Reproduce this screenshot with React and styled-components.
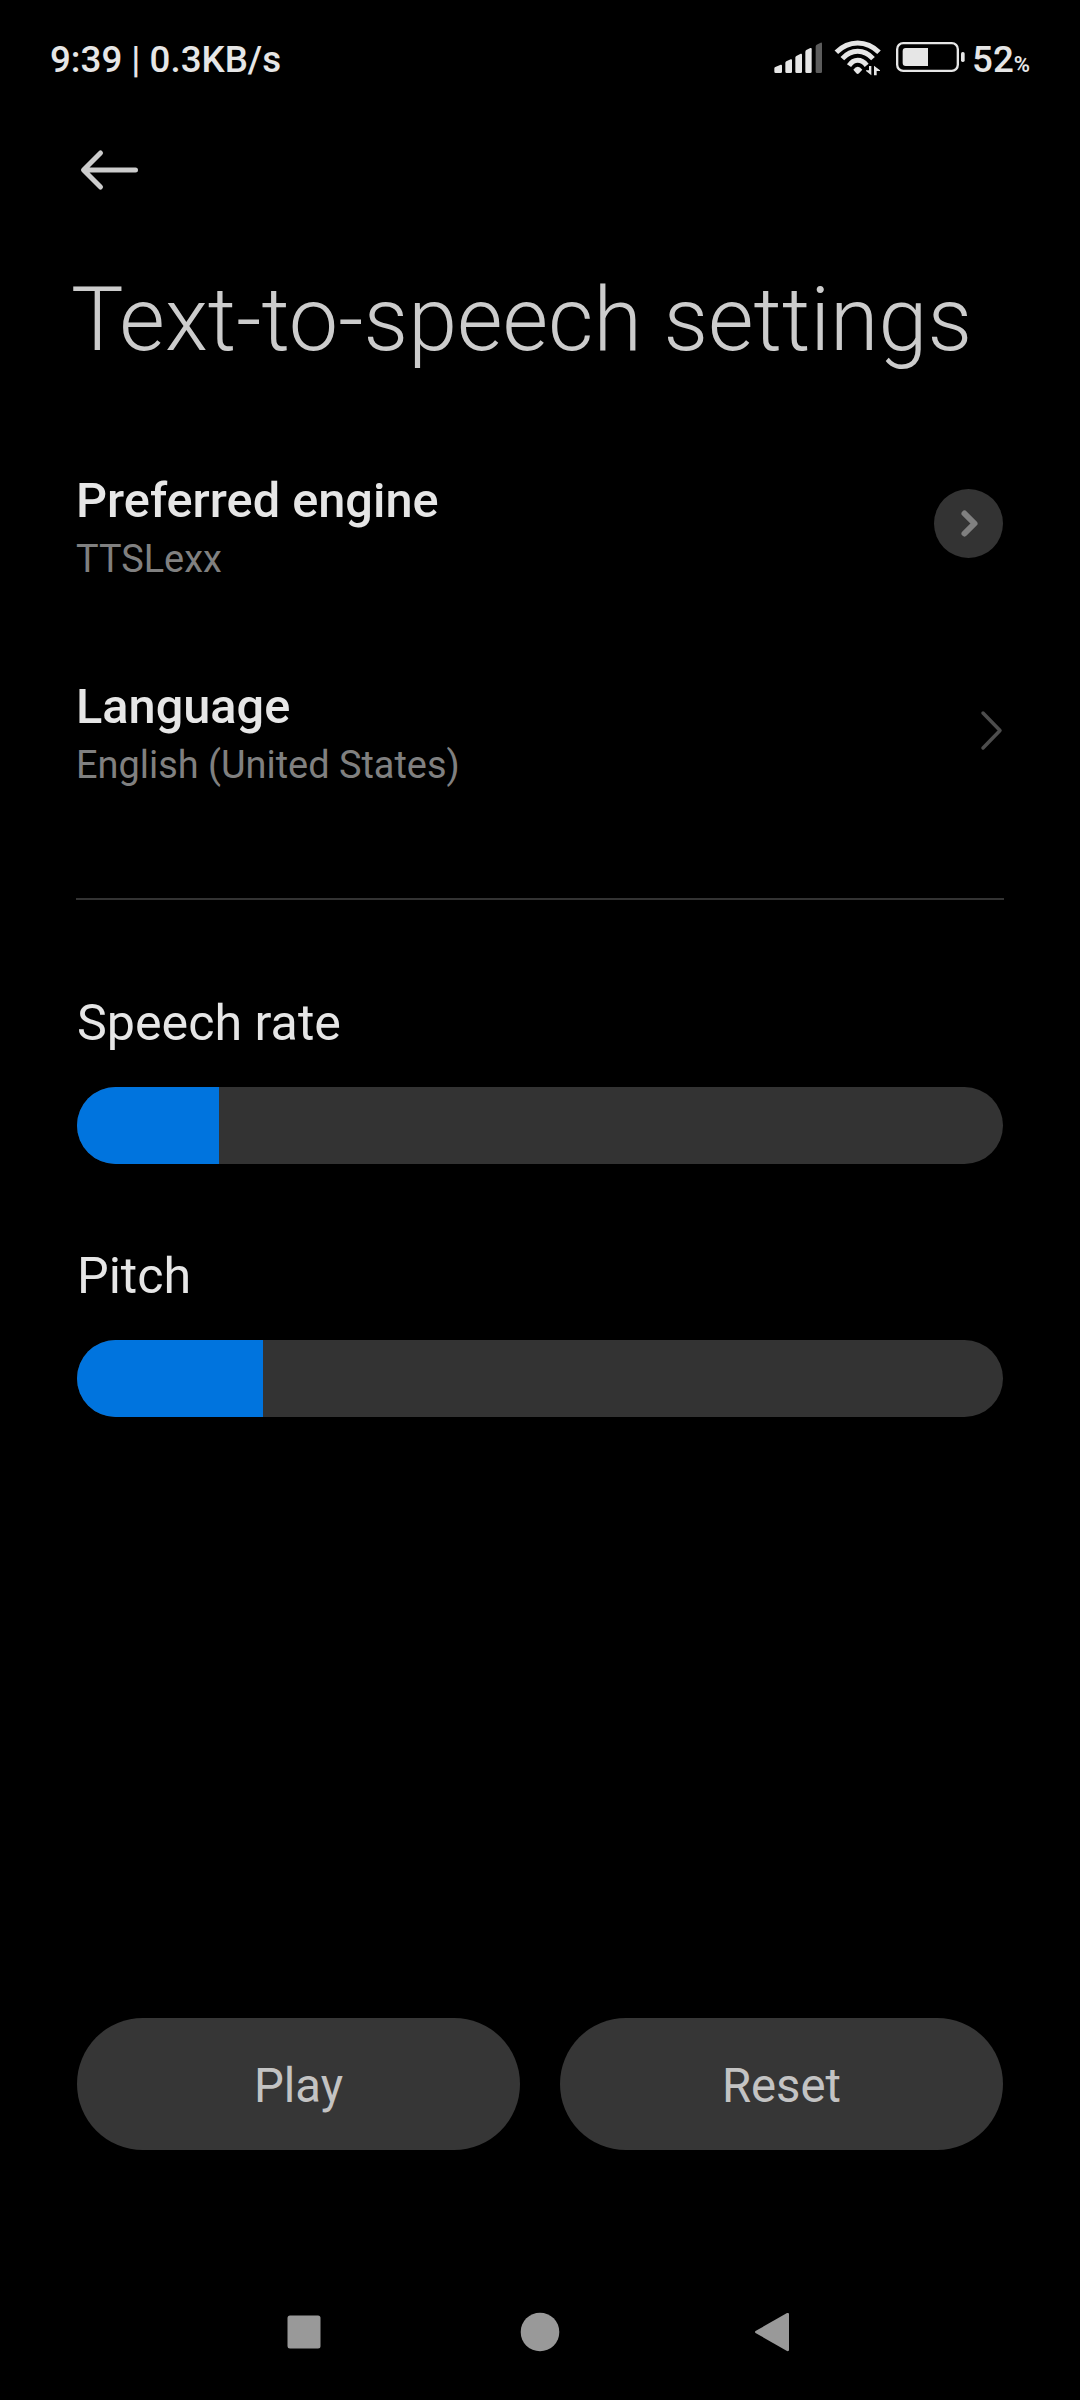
import React from "react";
import styled, { createGlobalStyle, ThemeProvider } from "styled-components";

const theme = {
  background: "#000",
  text: "#e6e6e6",
  title: "#cccccc",
  muted: "#808080",
  accent: "#0074de",
  track: "#333333",
  button: "#363636",
  buttonText: "#c3c3c3",
  nav: "#999999",
};

const GlobalStyle = createGlobalStyle`
  body {
    margin: 0;
    background: #000;
    font-family: Roboto, "Liberation Sans", sans-serif;
  }
  svg {
    display: block;
  }
`;

const Screen = styled.div`
  box-sizing: border-box;
  width: 1080px;
  height: 2400px;
  display: flex;
  flex-direction: column;
  overflow: hidden;
  background: ${({ theme }) => theme.background};
  color: ${({ theme }) => theme.text};
`;

const StatusBar = styled.div`
  height: 119px;
  box-sizing: border-box;
  padding: 0 50px;
  display: flex;
  align-items: center;
  justify-content: space-between;
  font-size: 36.7px;
  font-weight: 500;
`;

const StatusIcons = styled.div`
  display: flex;
  align-items: center;
`;

const StatusSvg = styled.svg`
  height: 70px;
  width: ${({ $width }) => $width}px;
  fill: ${({ theme }) => theme.text};
`;

const Battery = styled.span`
  margin-left: 6px;
`;

const Percent = styled.span`
  font-size: 22px;
  font-weight: 600;
`;

const Toolbar = styled.div`
  height: 102px;
  padding-left: 76px;
  display: flex;
  align-items: center;
`;

const IconButton = styled.button`
  padding: 0;
  border: none;
  background: none;
  color: ${({ theme }) => theme.title};
`;

const Title = styled.h1`
  margin: 47px 0 49px 71px;
  font-size: 88.1px;
  line-height: 104px;
  font-weight: 300;
  white-space: nowrap;
  color: ${({ theme }) => theme.title};
`;

const Content = styled.div`
  flex: 1;
  padding: 0 77px;
`;

const Row = styled.div`
  height: 206px;
  display: flex;
  align-items: center;
  justify-content: space-between;
`;

const RowText = styled.div`
  margin-left: -1px;
  padding-top: 5px;
`;

const RowTitle = styled.div`
  font-size: 48.7px;
  line-height: 58px;
  font-weight: 500;
`;

const RowValue = styled.div`
  margin-top: 6px;
  font-size: 37.9px;
  line-height: 46px;
  color: ${({ theme }) => theme.muted};
`;

const RoundButton = styled.button`
  width: 69px;
  height: 69px;
  margin-bottom: 1px;
  padding: 0;
  border: none;
  border-radius: 50%;
  display: flex;
  align-items: center;
  justify-content: center;
  background: ${({ theme }) => theme.track};
  color: ${({ theme }) => theme.muted};
`;

const Chevron = styled.svg`
  color: #4d4d4d;
`;

const Divider = styled.hr`
  height: 2px;
  margin: 65px -1px 93px;
  border: none;
  background: ${({ theme }) => theme.track};
`;

const SliderGroup = styled.div`
  margin-bottom: 82px;
`;

const SliderLabel = styled.div`
  margin-bottom: 34px;
  font-size: 50.2px;
  line-height: 60px;
`;

const Track = styled.div`
  height: 77px;
  border-radius: 39px;
  overflow: hidden;
  background: ${({ theme }) => theme.track};
`;

const Fill = styled.div`
  height: 100%;
  background: ${({ theme }) => theme.accent};
`;

const Actions = styled.div`
  padding: 0 77px;
  display: flex;
  gap: 40px;
`;

const ActionButton = styled.button`
  flex: 1;
  height: 132px;
  padding: 3px 0 0;
  border: none;
  border-radius: 66px;
  font-family: inherit;
  font-size: 47.3px;
  background: ${({ theme }) => theme.button};
  color: ${({ theme }) => theme.buttonText};
`;

const NavBar = styled.div`
  height: 136px;
  margin-top: 114px;
  padding: 0 287px;
  display: flex;
  align-items: center;
  justify-content: space-between;
`;

const NavIcon = styled.svg`
  fill: ${({ theme }) => theme.nav};
`;

const Slider = ({ label, value }) => (
  <SliderGroup>
    <SliderLabel>{label}</SliderLabel>
    <Track>
      <Fill style={{ width: `${value}%` }} />
    </Track>
  </SliderGroup>
);

const SignalIcon = () => (
  <StatusSvg $width={58} viewBox="30 0 174 210">
    <path d="M43 130 Q43 127 46 126 L62 119.500 Q66 118.500 66 122 V140 Q66 144 62 144 H47 Q43 144 43 140Z" />
    <path d="M76 114 Q76 111 79 109 L92 103 Q96 101.500 96 106 V140 Q96 144 92 144 H80 Q76 144 76 140Z" />
    <path d="M106 98 Q106 95 109 93 L122 86.500 Q126 85 126 89 V140 Q126 144 122 144 H110 Q106 144 106 140Z" />
    <path d="M136 81 Q136 77 139 75 L151 69 Q155 67.500 155 72 V140 Q155 144 151 144 H140 Q136 144 136 140Z" />
    <path
      d="M167 65 Q167 61 170 59 L182 53 Q186 51.500 186 56 V140 Q186 144 182 144 H171 Q167 144 167 140Z"
      fill="#5c5c5c"
    />
  </StatusSvg>
);

const WifiIcon = () => (
  <StatusSvg $width={64} viewBox="204 0 192 210">
    <g fill="none" stroke="#e6e6e6" strokeWidth="15">
      <path d="M229 82 Q257 54 293 54 Q329 54 357 82" />
      <path d="M247 101 Q267 79 293 79 Q319 79 339 101" />
      <path d="M267 122 Q278 106 293 106 Q308 106 320 121" />
    </g>
    <path d="M280 134 Q293 117 307 134 L297 145 Q293 149 289 145Z" />
    <path d="M327 123 H334 V151 L318 138 V136 H327Z" />
    <path d="M342 151 V122 L360 136 V138 H350 V151Z" />
  </StatusSvg>
);

const BatteryIcon = () => (
  <StatusSvg $width={74} viewBox="396 0 222 210">
    <rect
      x="411.500"
      y="54.500"
      width="182"
      height="83"
      rx="18"
      fill="none"
      stroke="#e6e6e6"
      strokeWidth="7"
    />
    <path d="M437 69 H504 V123 H437 Q428 123 428 114 V78 Q428 69 437 69Z" />
    <rect x="603" y="81" width="11" height="30" rx="5" />
  </StatusSvg>
);

const App = () => (
  <ThemeProvider theme={theme}>
    <GlobalStyle />
    <Screen>
      <StatusBar>
        <span>9:39 | 0.3KB/s</span>
        <StatusIcons>
          <SignalIcon />
          <WifiIcon />
          <BatteryIcon />
          <Battery>
            52<Percent>%</Percent>
          </Battery>
        </StatusIcons>
      </StatusBar>

      <Toolbar>
        <IconButton aria-label="Back">
          <svg
            width="66"
            height="44"
            viewBox="0 0 66 44"
            fill="none"
            stroke="currentColor"
            strokeWidth="5"
            strokeLinecap="round"
            strokeLinejoin="round"
          >
            <path d="M24.500 5 L7.500 22 L24.500 39 M8 22 H59.500" />
          </svg>
        </IconButton>
      </Toolbar>

      <Title>Text-to-speech settings</Title>

      <Content>
        <Row>
          <RowText>
            <RowTitle>Preferred engine</RowTitle>
            <RowValue>TTSLexx</RowValue>
          </RowText>
          <RoundButton aria-label="Preferred engine">
            <svg
              width="69"
              height="69"
              fill="none"
              stroke="currentColor"
              strokeWidth="6"
              strokeLinecap="round"
              strokeLinejoin="round"
            >
              <path d="M30.500 24.500 L40.500 34.500 L30.500 44.500" />
            </svg>
          </RoundButton>
        </Row>
        <Row>
          <RowText>
            <RowTitle>Language</RowTitle>
            <RowValue>English (United States)</RowValue>
          </RowText>
          <Chevron
            width="24"
            height="42"
            fill="none"
            stroke="currentColor"
            strokeWidth="3.500"
            strokeLinecap="round"
            strokeLinejoin="round"
          >
            <path d="M4 4 L21 21.500 L4 39" />
          </Chevron>
        </Row>
        <Divider />
        <Slider label="Speech rate" value={15.35} />
        <Slider label="Pitch" value={20.1} />
      </Content>

      <Actions>
        <ActionButton>Play</ActionButton>
        <ActionButton>Reset</ActionButton>
      </Actions>

      <NavBar>
        <NavIcon width="34" height="40">
          <rect x="0.500" y="3.500" width="33" height="33" rx="2.500" />
        </NavIcon>
        <NavIcon width="44" height="40">
          <circle cx="24" cy="20" r="19.300" />
        </NavIcon>
        <NavIcon width="38" height="40">
          <path d="M0.500 19 L32 1 Q34 0.500 34 2 V38 Q34 39.500 32 39 L0.500 21 Q-0.500 20 0.500 19Z" />
        </NavIcon>
      </NavBar>
    </Screen>
  </ThemeProvider>
);

export default App;
